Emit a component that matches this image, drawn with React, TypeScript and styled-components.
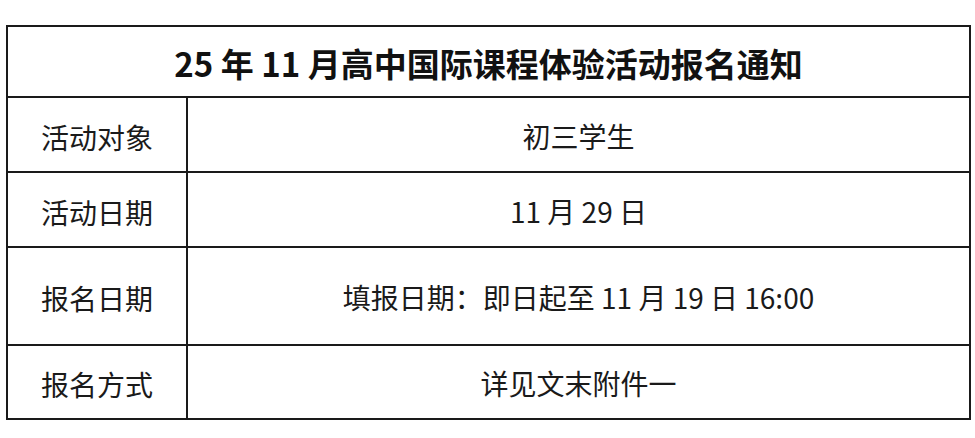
import React, {FC} from 'react'
import styled, {createGlobalStyle} from 'styled-components'

type RowType = {
    label: string
    value: string
    height: number
}

const rows: RowType[] = [
    {label: '活动对象', value: '初三学生', height: 73},
    {label: '活动日期', value: '11 月 29 日', height: 73},
    {label: '报名日期', value: '填报日期：即日起至 11 月 19 日 16:00', height: 96},
    {label: '报名方式', value: '详见文末附件一', height: 72},
]

const GlobalStyle = createGlobalStyle`
  html, body {
    margin: 0;
    padding: 0;
    background: #ffffff;
  }
  body {
    font-family: "Noto Sans CJK SC", "Noto Sans", sans-serif;
    color: #1a1a1a;
  }
`

const App: FC = () => {
    return (
        <>
            <GlobalStyle/>
            <Page>
                <Table rows={rows.map(r => r.height + 'px').join(' ')}>
                    <TitleCell>25 年 11 月高中国际课程体验活动报名通知</TitleCell>
                    {rows.map(r => (
                        <React.Fragment key={r.label}>
                            <LabelCell>{r.label}</LabelCell>
                            <ValueCell>{r.value}</ValueCell>
                        </React.Fragment>
                    ))}
                </Table>
            </Page>
        </>
    )
}
export default App

let Page = styled.div`
  width: 975px;
  height: 438px;
  padding: 25px 0 0 6px;
  box-sizing: border-box;
  background: #ffffff;
`

let Table = styled.div<{rows: string}>`
  display: grid;
  width: 965px;
  box-sizing: border-box;
  grid-template-columns: 178px 781px;
  grid-template-rows: 69px ${p => p.rows};
  gap: 2px;
  padding: 2px;
  background: #1a1a1a;
`

let Cell = styled.div`
  background: #ffffff;
  display: flex;
  align-items: center;
  justify-content: center;
  white-space: nowrap;
`

let TitleCell = styled(Cell)`
  grid-column: 1 / span 2;
  font-size: 33px;
  font-weight: 700;
  color: #111111;
  padding-top: 2px;
`

let LabelCell = styled(Cell)`
  font-size: 28px;
  padding-top: 4px;
`

let ValueCell = styled(Cell)`
  font-size: 28px;
  padding-top: 2px;
`
